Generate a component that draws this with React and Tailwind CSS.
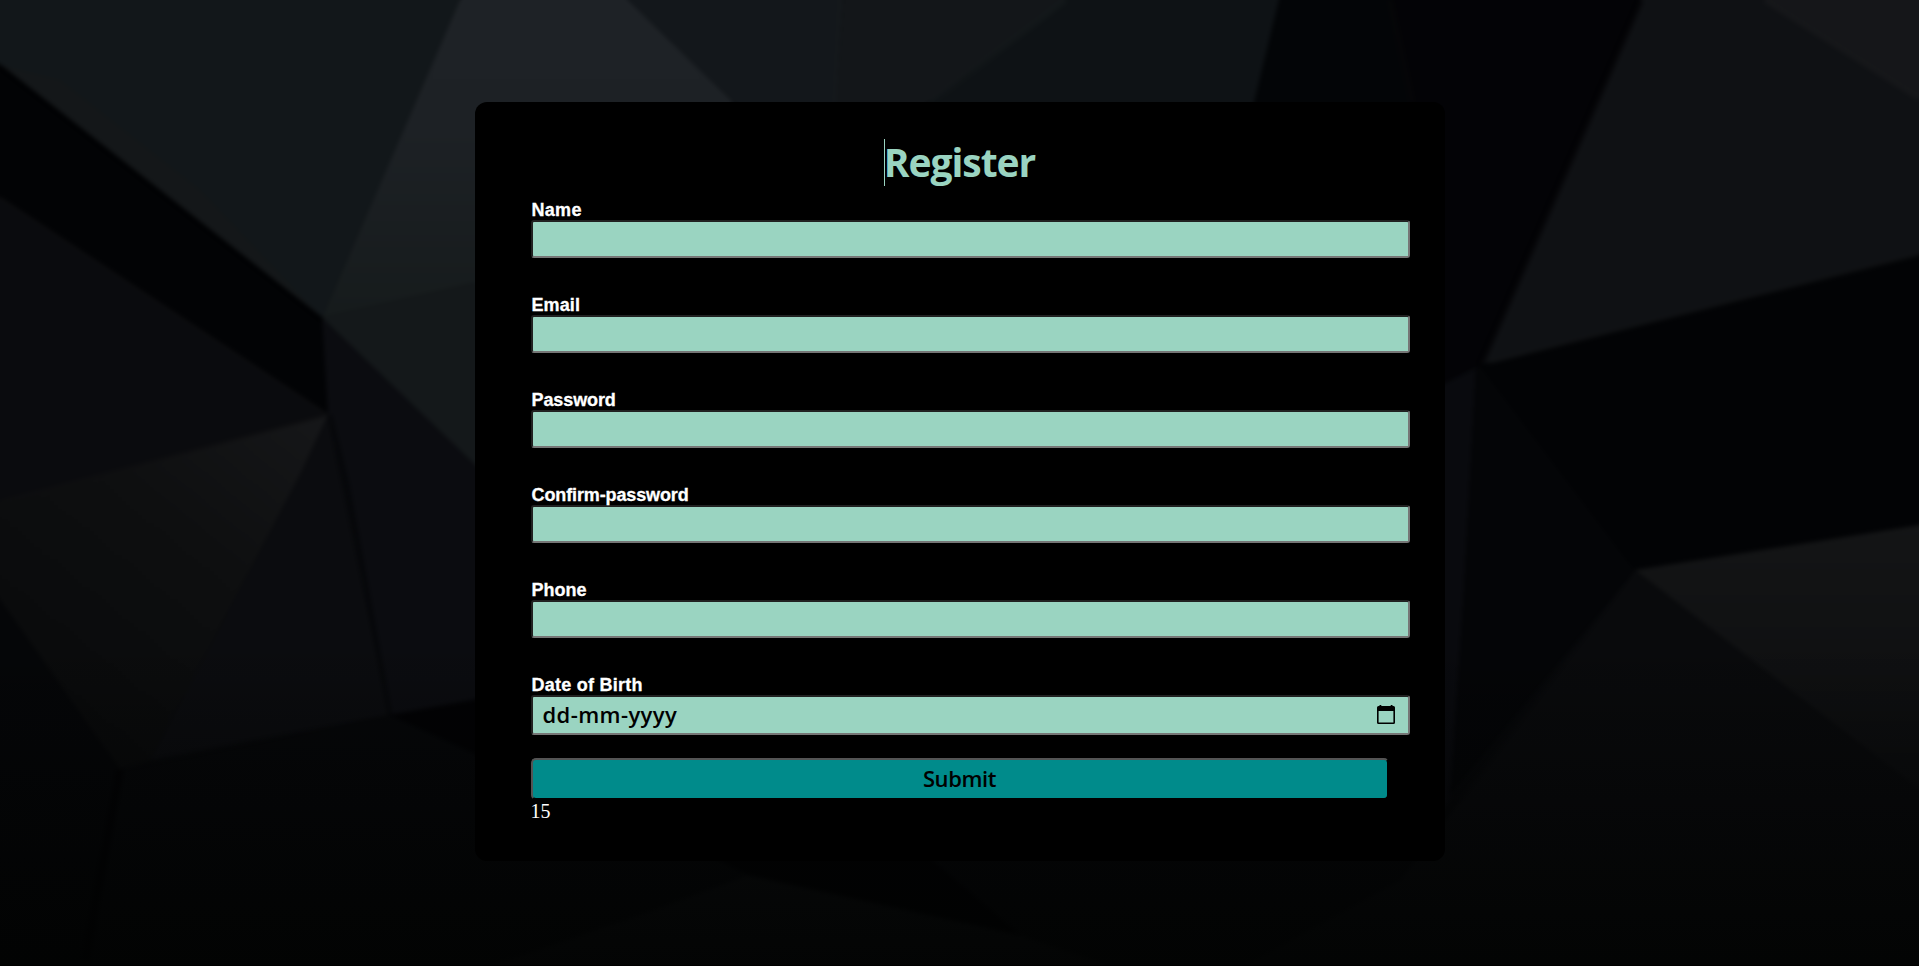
const FIELDS = [
  { id: "name", label: "Name", type: "text", spacing: "tracking-[0.3px]" },
  { id: "email", label: "Email", type: "email", spacing: "tracking-[0.1px]" },
  { id: "password", label: "Password", type: "password", spacing: "tracking-[-0.1px]" },
  { id: "confirm", label: "Confirm-password", type: "password", spacing: "tracking-[-0.12px]" },
  { id: "phone", label: "Phone", type: "tel", spacing: "tracking-[0px]" },
];

const FACETS = [
  ["-20,-20 460,-20 460,0 322,318 0,65 -20,50", "#12171a"],
  ["0,65 322,318 200,190 60,80", "#141719"],
  ["460,0 470,-20 618,-20 628,0 733,102 733,300 475,283 322,318", "url(#bright)"],
  ["322,318 475,283 600,283 600,585 475,465", "#14181a"],
  ["-20,50 0,65 322,318 328,415 0,198 -20,185", "#020305"],
  ["322,318 475,465 600,585 600,690 390,715 345,483 328,415", "#0b0c10"],
  ["-20,185 0,198 328,415 0,502 -20,508", "#0a0b0e"],
  ["328,415 0,502 -20,508 -20,570 0,600 120,770 150,760 300,475", "url(#left)"],
  ["328,415 300,475 150,760 390,715", "#0b0c0f"],
  ["-20,570 0,600 120,770 85,990 -20,990", "#050608"],
  ["120,770 390,715 600,800 1500,800 1500,990 85,990", "#060709"],
  ["390,715 500,695 500,765", "#020204"],
  ["628,0 610,-20 845,-20 835,120 750,120 733,102", "#13171b"],
  ["845,-20 1090,-20 1065,0 930,102 910,120 835,120", "#131619"],
  ["1090,-20 1284,-20 1250,120 910,120", "#0e1215"],
  ["1284,-20 1390,-20 1412,120 1250,120", "#030507"],
  ["1390,-20 1648,-20 1640,0 1480,365 1430,390 1412,120", "#030306"],
  ["1640,0 1648,-20 1750,-20 1765,0 1919,98 1940,110 1940,249 1480,365", "#0f1114"],
  ["1750,-20 1940,-20 1940,110 1919,98 1765,0", "#151619"],
  ["1480,365 1940,249 1940,522 1635,570", "#020305"],
  ["1420,395 1476,368 1464,590 1450,800 1420,840", "#090a0e"],
  ["1476,368 1480,365 1635,570 1450,795 1464,590", "#040507"],
  ["1635,570 1940,522 1940,806", "url(#right)"],
  ["1635,570 1940,806 1940,990 1200,990 1400,880", "#090a0c"],
  ["748,875 1020,935 1180,990 420,990 640,915", "#0b0c0e"],
  ["748,875 700,850 920,850 1020,935", "#020204"],
];

const EDGES = [
  ["0,198 328,415 0,502", "#101113", 3],
  ["0,67 322,320", "#000002", 5],
  ["330,415 347,483 390,715", "#050608", 5],
  ["1640,0 1480,365", "#010103", 8],
  ["1490,362 1919,254", "#131415", 4],
  ["1765,0 1919,98", "#191a1c", 6],
  ["1390,0 1412,102", "#060709", 8],
  ["840,0 835,102", "#171b1e", 4],
  ["1065,0 930,102", "#151a1c", 7],
  ["120,770 85,960", "#020203", 8],
];

function FacetedBackdrop() {
  return (
    <svg
      className="absolute inset-0 h-[965px] w-full"
      viewBox="0 0 1919 965"
      preserveAspectRatio="none"
      aria-hidden="true"
    >
      <defs>
        <filter id="soft" x="-2%" y="-2%" width="104%" height="104%" colorInterpolationFilters="sRGB">
          <feGaussianBlur stdDeviation="2" />
        </filter>
        <linearGradient id="bright" x1="0" y1="0" x2="0" y2="1">
          <stop offset="0" stopColor="#1f2327" />
          <stop offset="0.45" stopColor="#1d2125" />
          <stop offset="1" stopColor="#161b1c" />
        </linearGradient>
        <linearGradient id="left" x1="1" y1="0" x2="0.2" y2="1">
          <stop offset="0" stopColor="#161719" />
          <stop offset="0.4" stopColor="#0e0f10" />
          <stop offset="1" stopColor="#08090a" />
        </linearGradient>
        <linearGradient id="right" x1="0" y1="0" x2="0" y2="1">
          <stop offset="0" stopColor="#141516" />
          <stop offset="1" stopColor="#0b0c0e" />
        </linearGradient>
        <linearGradient id="fade" x1="0" y1="0" x2="0" y2="1">
          <stop offset="0" stopColor="#010201" stopOpacity="0" />
          <stop offset="1" stopColor="#010201" stopOpacity="0.75" />
        </linearGradient>
      </defs>
      <rect width="1919" height="965" fill="#07080a" />
      <g filter="url(#soft)">
        {FACETS.map(([points, fill]) => (
          <polygon key={points} points={points} fill={fill} />
        ))}
        {EDGES.map(([points, stroke, width]) => (
          <polyline
            key={points}
            points={points}
            fill="none"
            stroke={stroke}
            strokeWidth={width}
            strokeOpacity="0.6"
          />
        ))}
      </g>
      <rect y="640" width="1919" height="325" fill="url(#fade)" />
    </svg>
  );
}

function CalendarIcon() {
  return (
    <svg className="h-5 w-[18px]" viewBox="0 0 18 20" aria-hidden="true">
      <path
        fillRule="evenodd"
        d="M2.500 0h1.800v1h9.400V0h1.800v1h1Q18 1 18 2.500v15Q18 19 16.500 19h-15Q0 19 0 17.500v-15Q0 1 1.500 1h1zM1.600 6v11.400h14.800V6z"
      />
    </svg>
  );
}

const LABEL =
  "block h-6 pl-px pt-0.5 whitespace-nowrap text-[18px] leading-6 font-bold text-white [-webkit-text-stroke:0.3px_white] font-['Liberation_Sans',Arial,sans-serif]";
const CONTROL =
  "block w-[879px] rounded-[3px] border-2 border-[#767676] [border-style:inset] bg-[#9ad4c1]";

export default function App() {
  return (
    <div className="relative h-[966px] w-full overflow-hidden bg-black">
      <FacetedBackdrop />
      <main className="relative mx-auto flex h-full w-[970px] flex-col pt-[102px]">
        <form className="h-[759px] rounded-xl bg-black px-14 pt-[37px]">
          <h1 className="flex h-[47px] items-center justify-center text-[39px] leading-[46px] font-bold text-[#9ad4c1] font-['Open_Sans',sans-serif]">
            <span className="h-[47px] w-px bg-[#9ad4c1]" />
            <span className="-ml-px h-[47px] tracking-[-1.05px]">Register</span>
          </h1>
          <div className="mt-[10px] flex flex-col gap-[33px]">
            {FIELDS.map((field) => (
              <div key={field.id}>
                <label htmlFor={field.id} className={`${LABEL} ${field.spacing}`}>
                  {field.label}
                </label>
                <input id={field.id} type={field.type} className={`${CONTROL} h-[38px]`} />
              </div>
            ))}
            <div>
              <span className={`${LABEL} tracking-[0.25px]`}>Date of Birth</span>
              <div className={`${CONTROL} h-10`}>
                <div className="flex h-9 items-center justify-between pr-[13px] pl-[10px]">
                  <span className="h-9 text-[22px] leading-[34px] font-semibold tracking-[0.4px] text-black font-['Open_Sans',sans-serif]">
                    dd-mm-yyyy
                  </span>
                  <CalendarIcon />
                </div>
              </div>
            </div>
          </div>
          <button
            type="button"
            className="mt-[23px] block h-[42px] w-[858px] rounded-[5px] border-2 border-black [border-style:outset] bg-[#008b8b] pb-0.5 text-[22px] leading-[36px] font-semibold tracking-[-0.4px] text-black font-['Open_Sans',sans-serif]"
          >
            Submit
          </button>
          <p className="text-[20px] leading-[23px] text-white font-['Liberation_Serif',serif]">15</p>
        </form>
      </main>
    </div>
  );
}
